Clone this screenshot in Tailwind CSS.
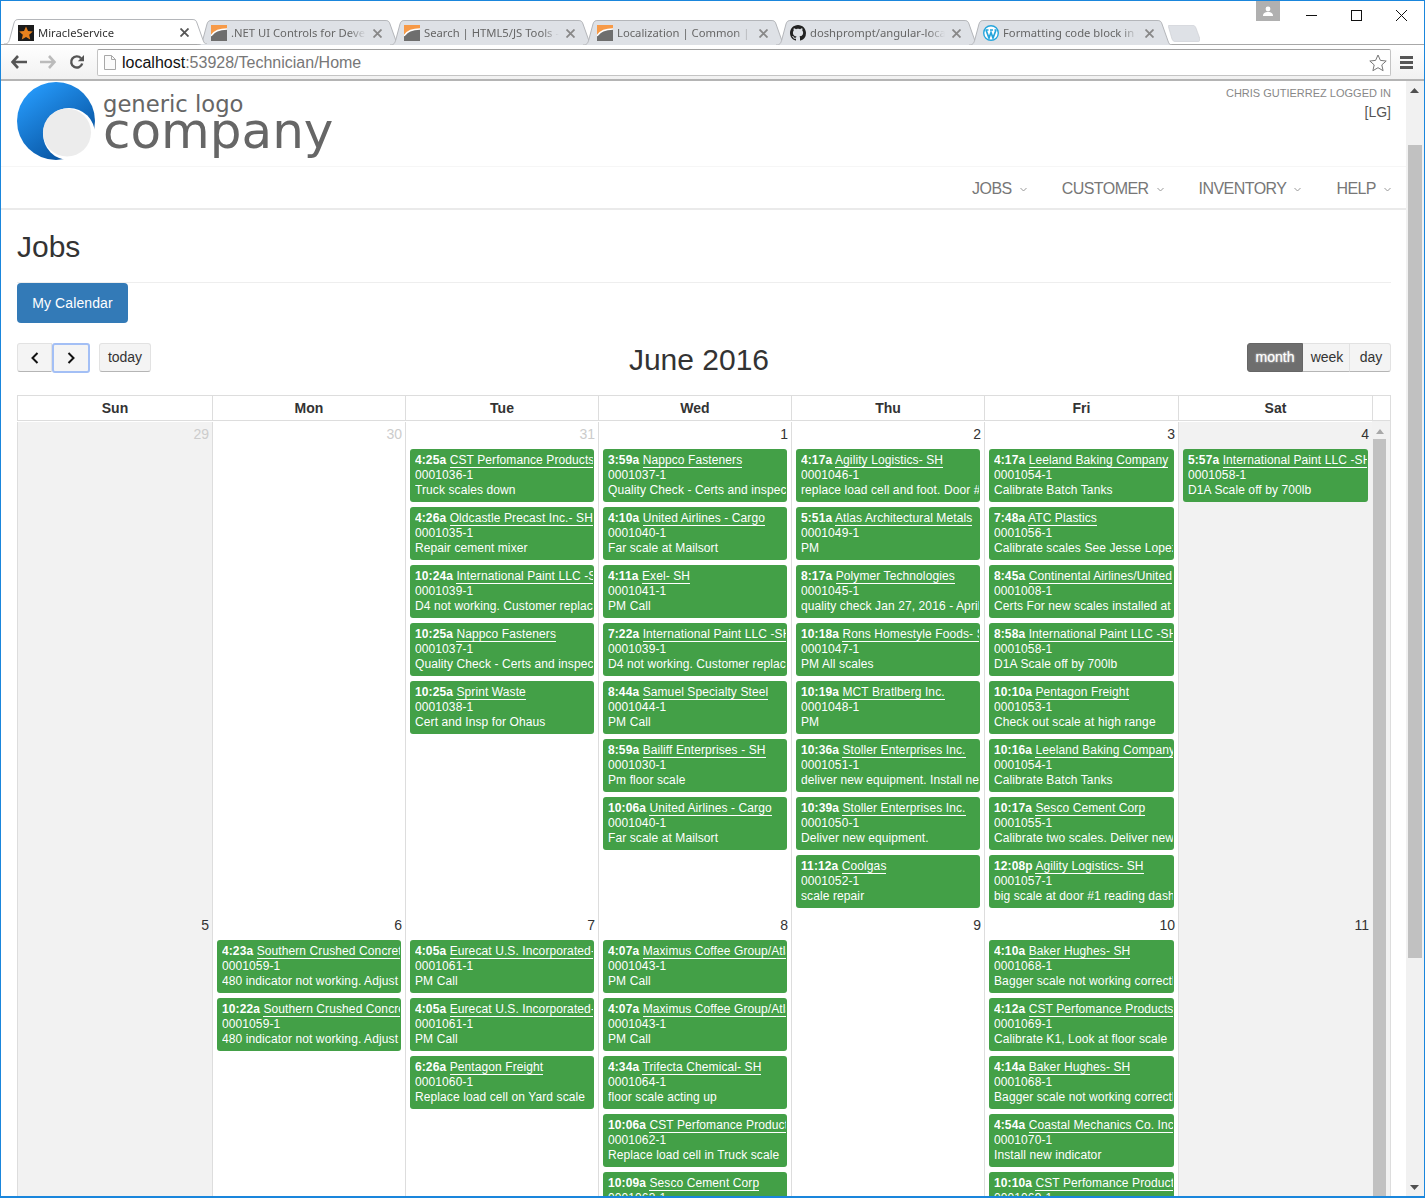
<!DOCTYPE html>
<html lang="en">
<head>
  <meta charset="UTF-8">
  <title>MiracleService</title>
  <script src="https://cdn.jsdelivr.net/npm/@tailwindcss/browser@4"></script>
</head>
<body class="bg-white">
<div class="w-[1425px] h-[1198px] overflow-hidden flex flex-col border border-[#1a86dc] border-b-2 bg-white text-[#333] [font-family:'Liberation_Sans',sans-serif]">

  <!-- Tab strip -->
  <div class="relative h-[44px] shrink-0 border-b border-[#a8a8a8] bg-white">
    <div id="tabs" class="flex items-end h-[43px] pl-[3px]"></div>
    <div class="absolute right-[144px] top-0 w-[24px] h-[20px] bg-[#b0b0b0] flex items-center justify-center">
      <svg width="10" height="10" viewBox="0 0 10 10"><circle cx="5" cy="3" r="2.4" fill="#fff"/><path d="M0 10c0-3 2-4 5-4s5 1 5 4z" fill="#fff"/></svg>
    </div>
    <div class="absolute right-[17px] top-[9px] flex gap-[34px] items-center">
      <svg width="11" height="11" viewBox="0 0 11 11"><path d="M0 5.5h11" stroke="#111" stroke-width="1"/></svg>
      <svg width="11" height="11" viewBox="0 0 11 11"><rect x=".5" y=".5" width="10" height="10" fill="none" stroke="#111"/></svg>
      <svg width="11" height="11" viewBox="0 0 11 11"><path d="M0 0l11 11M11 0L0 11" stroke="#111" stroke-width="1"/></svg>
    </div>
  </div>

  <!-- Toolbar -->
  <div class="h-[36px] shrink-0 flex items-center border-b-2 border-[#b4b4b4] bg-gradient-to-b from-white to-[#f1f1f1]">
    <svg class="ml-[10px]" width="16" height="14" viewBox="0 0 16 14"><path d="M7 1L1.5 7 7 13M2 7h14" fill="none" stroke="#555" stroke-width="2.6"/></svg>
    <svg class="ml-[13px]" width="16" height="14" viewBox="0 0 16 14"><path d="M9 1l5.5 6L9 13M14 7H0" fill="none" stroke="#bbb" stroke-width="2.6"/></svg>
    <svg class="ml-[13px]" width="16" height="16" viewBox="0 0 16 16"><path d="M13.2 9.5A5.6 5.6 0 1 1 12 4.2" fill="none" stroke="#555" stroke-width="2.4"/><path d="M15 1v6.2H8.8z" fill="#555"/></svg>
    <div class="ml-[12px] mt-px w-[1294px] h-[27px] flex items-center bg-white border border-[#c4c4c4] border-t-[#a0a0a0] rounded-[2px]">
      <svg class="ml-[6px]" width="12" height="15" viewBox="0 0 12 15"><path d="M.5.5h7l4 4v10H.5z" fill="#fbfbfb" stroke="#a8a8a8"/><path d="M7.5.5v4h4" fill="none" stroke="#a8a8a8"/></svg>
      <span class="ml-[6px] text-[16px] leading-[20px] text-[#777]"><span class="text-[#111]">localhost</span>:53928/Technician/Home</span>
      <svg class="ml-auto mr-[3px]" width="18" height="18" viewBox="0 0 18 18"><path d="M9 1l2.4 5.4 5.8.6-4.4 3.9 1.3 5.8L9 13.7l-5.1 3 1.3-5.8L.8 7l5.8-.6z" fill="#fff" stroke="#777"/></svg>
    </div>
    <div class="ml-[9px] flex flex-col gap-[2px]">
      <div class="w-[13px] h-[3px] bg-[#555]"></div>
      <div class="w-[13px] h-[3px] bg-[#555]"></div>
      <div class="w-[13px] h-[3px] bg-[#555]"></div>
    </div>
  </div>

  <!-- Page -->
  <div class="flex flex-1 min-h-0">
    <div class="w-[1405px] shrink-0 min-w-0 overflow-hidden">

      <header class="h-[86px] pl-[16px] pr-[15px] flex items-start border-b border-[#f6f6f6]">
        <svg class="mt-px shrink-0" width="78" height="78" viewBox="0 0 78 78">
          <defs>
            <linearGradient id="logoBlue" x1="0.15" y1="0.1" x2="0.75" y2="0.95">
              <stop offset="0" stop-color="#2598f8"/>
              <stop offset="1" stop-color="#06509c"/>
            </linearGradient>
          </defs>
          <circle cx="39" cy="39" r="39" fill="url(#logoBlue)"/>
          <circle cx="52" cy="52" r="26" fill="#fff"/>
          <circle cx="50" cy="50.5" r="24" fill="#ececec"/>
        </svg>
        <div class="ml-[8px] mt-[10px] flex flex-col text-[#666] [font-family:'DejaVu_Sans',sans-serif]">
          <span class="text-[22.7px] leading-[26px]">generic logo</span>
          <span class="text-[50px] leading-[46px] -mt-[9px]">company</span>
        </div>
        <div class="ml-auto pt-[6px] text-right">
          <div class="text-[11px] leading-[13px] text-[#888]">CHRIS GUTIERREZ LOGGED IN</div>
          <div class="mt-[2px] text-[14px] leading-[20px] text-[#555]">[LG]</div>
        </div>
      </header>

      <nav class="h-[43px] pt-[2px] pr-[15px] flex items-center justify-end border-b-2 border-[#eaeaea] text-[16px] tracking-[-0.55px] text-[#777]">
        <a class="flex items-center">JOBS<svg class="ml-[8px] mt-px" width="7" height="5" viewBox="0 0 7 5"><path d="M.5 1l3 3 3-3" fill="none" stroke="#999"/></svg></a>
        <a class="ml-[35px] flex items-center">CUSTOMER<svg class="ml-[8px] mt-px" width="7" height="5" viewBox="0 0 7 5"><path d="M.5 1l3 3 3-3" fill="none" stroke="#999"/></svg></a>
        <a class="ml-[35px] flex items-center">INVENTORY<svg class="ml-[8px] mt-px" width="7" height="5" viewBox="0 0 7 5"><path d="M.5 1l3 3 3-3" fill="none" stroke="#999"/></svg></a>
        <a class="ml-[35px] flex items-center">HELP<svg class="ml-[8px] mt-px" width="7" height="5" viewBox="0 0 7 5"><path d="M.5 1l3 3 3-3" fill="none" stroke="#999"/></svg></a>
      </nav>

      <main class="pl-[16px] pr-[15px]">
        <div class="h-[73px] border-b border-[#eee] flex items-center">
          <h2 class="text-[30px] leading-[33px] text-[#333]">Jobs</h2>
        </div>
        <button class="block w-[111px] h-[40px] rounded-[4px] bg-[#337ab7] text-white text-[14px] tracking-[0.1px]">My Calendar</button>

        <div class="mt-[20px] h-[30px] flex justify-between items-start">
          <div class="flex">
            <button class="w-[35px] h-[29px] flex items-center justify-center rounded-l-[3px] bg-[#f4f4f4] border border-[#e2e2e2] border-b-[#b5b5b5]">
              <svg width="10" height="12" viewBox="0 0 10 12"><path d="M7.5 1L2.5 6l5 5" fill="none" stroke="#111" stroke-width="2"/></svg>
            </button>
            <button class="w-[38px] h-[30px] flex items-center justify-center rounded-[3px] bg-[#f4f4f4] border-2 border-[#a3bff5]">
              <svg width="10" height="12" viewBox="0 0 10 12"><path d="M2.5 1l5 5-5 5" fill="none" stroke="#111" stroke-width="2"/></svg>
            </button>
            <button class="ml-[9px] w-[52px] h-[29px] rounded-[3px] bg-[#f4f4f4] border border-[#e2e2e2] border-b-[#b5b5b5] text-[14px] text-[#333]">today</button>
          </div>
          <h2 class="text-[30px] leading-[33px] text-[#333]">June 2016</h2>
          <div class="flex h-[29px] text-[14px]">
            <button class="w-[56px] rounded-l-[3px] bg-[#6e6e6e] border border-[#666] text-white [text-shadow:0_0_2px_#fff]">month</button>
            <button class="w-[47px] pl-[2px] bg-[#f4f4f4] border-y border-r border-[#e2e2e2] border-b-[#b5b5b5] text-[#333]">week</button>
            <button class="w-[41px] pl-[2px] rounded-r-[3px] bg-[#f4f4f4] border-y border-r border-[#e2e2e2] border-b-[#b5b5b5] text-[#333]">day</button>
          </div>
        </div>

        <!-- Calendar -->
        <div class="mt-[22px] w-[1374px] border-t border-r border-[#ddd]">
          <div class="flex h-[25px] border-b border-[#ddd]">
            <div id="head" class="w-[1355px] grid grid-cols-[195px_193px_193px_193px_193px_194px_194px]"></div>
            <div class="w-[18px] border-l border-[#ddd]"></div>
          </div>
          <div class="flex">
            <div id="weeks" class="w-[1355px] shrink-0"></div>
            <div class="w-[18px] bg-[#f1f1f1] flex flex-col items-start pl-[1px]">
              <svg class="mt-[8px] ml-[3px]" width="8" height="5" viewBox="0 0 8 5"><path d="M4 0l4 5H0z" fill="#a8a8a8"/></svg>
              <div class="mt-[5px] w-[13px] h-[900px] bg-[#c1c1c1]"></div>
            </div>
          </div>
        </div>
      </main>
    </div>

    <!-- Page scrollbar -->
    <div class="w-[18px] bg-[#f1f1f1] flex flex-col pl-[2px]">
      <svg class="mt-[7px] ml-[2px]" width="9" height="5" viewBox="0 0 9 5"><path d="M4.500 0l4.500 5H0z" fill="#505050"/></svg>
      <div class="mt-[52px] w-[14px] h-[813px] bg-[#c1c1c1]"></div>
      <svg class="mt-auto mb-[6px] ml-[2px]" width="9" height="5" viewBox="0 0 9 5"><path d="M4.500 5L9 0H0z" fill="#505050"/></svg>
    </div>
  </div>
</div>

<script>
  // Browser tabs
  const orange = `<svg class="shrink-0" width="16" height="16" viewBox="0 0 16 16"><rect width="16" height="16" fill="#f79a48"/><path d="M0 16v-5C3 6 9 4 16 4v12z" fill="#6e6e6e"/><path d="M0 11C3 6 9 4 16 4" fill="none" stroke="#fff" stroke-width="1.4"/></svg>`;
  const tabs = [
    ['MiracleService', `<svg class="shrink-0" width="16" height="16" viewBox="0 0 16 16"><rect width="16" height="16" fill="#1c1c1c"/><path d="M8 1.500l2 4.500 4.800.5-3.600 3.200 1 4.800L8 12.100l-4.200 2.400 1-4.800L1.200 6.500 6 6z" fill="#e8821e"/></svg>`],
    ['.NET UI Controls for Developers', orange],
    ['Search | HTML5/JS Tools - Infragistics', orange],
    ['Localization | Common | Help', orange],
    ['doshprompt/angular-localization', `<svg class="shrink-0" width="16" height="16" viewBox="0 0 16 16"><path fill="#222" d="M8 0C3.580 0 0 3.580 0 8c0 3.540 2.290 6.530 5.470 7.590.4.070.55-.17.55-.38 0-.19-.01-.82-.01-1.490-2.010.37-2.530-.49-2.690-.94-.09-.23-.48-.94-.82-1.130-.28-.15-.68-.52-.01-.53.63-.01 1.080.58 1.230.82.72 1.210 1.870.87 2.330.66.07-.52.28-.87.51-1.070-1.780-.2-3.640-.89-3.640-3.950 0-.87.31-1.590.82-2.150-.08-.2-.36-1.020.08-2.120 0 0 .67-.21 2.200.82.64-.18 1.320-.27 2-.27.68 0 1.360.09 2 .27 1.530-1.040 2.200-.82 2.200-.82.44 1.100.16 1.920.08 2.120.51.56.82 1.270.82 2.150 0 3.070-1.870 3.750-3.650 3.950.29.25.54.73.54 1.480 0 1.070-.01 1.930-.01 2.200 0 .21.15.46.55.38A8.013 8.013 0 0016 8c0-4.420-3.580-8-8-8z"/></svg>`],
    ['Formatting code block in Chrome', `<svg class="shrink-0" width="16" height="16" viewBox="0 0 16 16"><circle cx="8" cy="8" r="7.300" fill="#fff" stroke="#25a5dc" stroke-width="1.400"/><path d="M3 5l3 8 2-5.500L10 13l3-8M2.500 5h3M7 5h3M11.500 5h2" fill="none" stroke="#25a5dc" stroke-width="1.700"/></svg>`]
  ];
  document.getElementById('tabs').innerHTML = tabs.map((t, i) => {
    const active = i === 0;
    return `
    <div class="relative ${active ? 'z-10 h-[25px]' : 'h-[24px]'} w-[203px] shrink-0 ${i ? '-ml-[10px]' : ''} flex items-center pl-[14px] pt-[2px]">
      <svg class="absolute left-0 top-0" width="203" height="25" viewBox="0 0 203 25">
        <path d="M0 25C4 25 5 23 6 19L10 4C11 1 12 .5 15 .5H188C191 .5 192 1 193 4L199 21C200 24 201 25 203 25" fill="${active ? '#fff' : '#dee1e6'}" stroke="#b4b6ba"/>
      </svg>
      <div class="relative flex items-center w-full">
        ${t[1]}
        <span class="ml-[4px] w-[135px] overflow-hidden whitespace-nowrap text-[11.25px] leading-[16px] [font-family:'Noto_Sans',sans-serif] [mask-image:linear-gradient(to_right,black_118px,transparent_135px)] ${active ? 'text-[#333]' : 'text-[#666]'}">${t[0]}</span>
        <svg class="ml-[7px]" width="9" height="9" viewBox="0 0 9 9"><path d="M.5.5l8 8M8.500.5l-8 8" stroke="${active ? '#555' : '#888'}" stroke-width="1.800"/></svg>
      </div>
    </div>`;
  }).join('') + `
    <svg class="-ml-[4px] mb-[2px] shrink-0" width="32" height="17" viewBox="0 0 32 17"><path d="M1 0H24C26 0 27 1 28 3L32 14C32 16 31 17 29 17H8C6 17 5 16 4 14L.5 2C.5 1 .5 0 1 0z" fill="#dee1e6" stroke="#c9cbd0" stroke-width=".6"/></svg>`;

  // Calendar header
  document.getElementById('head').innerHTML = ['Sun','Mon','Tue','Wed','Thu','Fri','Sat'].map(d =>
    `<div class="border-l border-[#ddd] text-center text-[14px] leading-[24px] font-bold text-[#333]">${d}</div>`
  ).join('');

  // Job events per day: [time, customer, job number, note]
  const intl1 = 'International Paint LLC -SH', quality = 'Quality Check - Certs and inspection';
  const week1 = [
    { n: 29, off: true, wk: true, ev: [] },
    { n: 30, off: true, ev: [] },
    { n: 31, off: true, ev: [
      ['4:25a','CST Perfomance Products','0001036-1','Truck scales down'],
      ['4:26a','Oldcastle Precast Inc.- SH','0001035-1','Repair cement mixer'],
      ['10:24a',intl1,'0001039-1','D4 not working. Customer replaced'],
      ['10:25a','Nappco Fasteners','0001037-1',quality],
      ['10:25a','Sprint Waste','0001038-1','Cert and Insp for Ohaus']
    ]},
    { n: 1, ev: [
      ['3:59a','Nappco Fasteners','0001037-1',quality],
      ['4:10a','United Airlines - Cargo','0001040-1','Far scale at Mailsort'],
      ['4:11a','Exel- SH','0001041-1','PM Call'],
      ['7:22a',intl1,'0001039-1','D4 not working. Customer replaced'],
      ['8:44a','Samuel Specialty Steel','0001044-1','PM Call'],
      ['8:59a','Bailiff Enterprises - SH','0001030-1','Pm floor scale'],
      ['10:06a','United Airlines - Cargo','0001040-1','Far scale at Mailsort']
    ]},
    { n: 2, ev: [
      ['4:17a','Agility Logistics- SH','0001046-1','replace load cell and foot. Door #1'],
      ['5:51a','Atlas Architectural Metals','0001049-1','PM'],
      ['8:17a','Polymer Technologies','0001045-1','quality check Jan 27, 2016 - April'],
      ['10:18a','Rons Homestyle Foods- SH','0001047-1','PM All scales'],
      ['10:19a','MCT Bratlberg Inc.','0001048-1','PM'],
      ['10:36a','Stoller Enterprises Inc.','0001051-1','deliver new equipment. Install new'],
      ['10:39a','Stoller Enterprises Inc.','0001050-1','Deliver new equipment.'],
      ['11:12a','Coolgas','0001052-1','scale repair']
    ]},
    { n: 3, ev: [
      ['4:17a','Leeland Baking Company','0001054-1','Calibrate Batch Tanks'],
      ['7:48a','ATC Plastics','0001056-1','Calibrate scales See Jesse Lopez'],
      ['8:45a','Continental Airlines/United','0001008-1','Certs For new scales installed at'],
      ['8:58a',intl1,'0001058-1','D1A Scale off by 700lb'],
      ['10:10a','Pentagon Freight','0001053-1','Check out scale at high range'],
      ['10:16a','Leeland Baking Company','0001054-1','Calibrate Batch Tanks'],
      ['10:17a','Sesco Cement Corp','0001055-1','Calibrate two scales. Deliver new'],
      ['12:08p','Agility Logistics- SH','0001057-1','big scale at door #1 reading dash']
    ]},
    { n: 4, wk: true, ev: [
      ['5:57a',intl1,'0001058-1','D1A Scale off by 700lb']
    ]}
  ];
  const week2 = [
    { n: 5, wk: true, ev: [] },
    { n: 6, ev: [
      ['4:23a','Southern Crushed Concrete','0001059-1','480 indicator not working. Adjust'],
      ['10:22a','Southern Crushed Concrete','0001059-1','480 indicator not working. Adjust']
    ]},
    { n: 7, ev: [
      ['4:05a','Eurecat U.S. Incorporated- SH','0001061-1','PM Call'],
      ['4:05a','Eurecat U.S. Incorporated- SH','0001061-1','PM Call'],
      ['6:26a','Pentagon Freight','0001060-1','Replace load cell on Yard scale']
    ]},
    { n: 8, ev: [
      ['4:07a','Maximus Coffee Group/Atlanta','0001043-1','PM Call'],
      ['4:07a','Maximus Coffee Group/Atlanta','0001043-1','PM Call'],
      ['4:34a','Trifecta Chemical- SH','0001064-1','floor scale acting up'],
      ['10:06a','CST Perfomance Products','0001062-1','Replace load cell in Truck scale'],
      ['10:09a','Sesco Cement Corp','0001063-1','Calibrate scale']
    ]},
    { n: 9, ev: [] },
    { n: 10, ev: [
      ['4:10a','Baker Hughes- SH','0001068-1','Bagger scale not working correctly'],
      ['4:12a','CST Perfomance Products','0001069-1','Calibrate K1, Look at floor scale'],
      ['4:14a','Baker Hughes- SH','0001068-1','Bagger scale not working correctly'],
      ['4:54a','Coastal Mechanics Co. Inc','0001070-1','Install new indicator'],
      ['10:10a','CST Perfomance Products','0001069-1','Calibrate K1']
    ]},
    { n: 11, wk: true, ev: [] }
  ];

  function renderEvent(e) {
    return `
      <div class="ml-[4px] mr-[4px] mb-[5px] h-[53px] rounded-[3px] bg-[#43a047] pl-[5px] pr-px pt-[4px] text-[12px] leading-[15px] tracking-[0.1px] text-white overflow-hidden">
        <div class="whitespace-nowrap overflow-hidden"><b>${e[0]}</b> <span class="border-b border-white">${e[1]}</span></div>
        <div class="whitespace-nowrap overflow-hidden">${e[2]}</div>
        <div class="whitespace-nowrap overflow-hidden">${e[3]}</div>
      </div>`;
  }
  function renderWeek(days, rowClass) {
    return `<div class="grid grid-cols-[195px_193px_193px_193px_193px_194px_194px] border-t ${rowClass}">` + days.map(d => `
      <div class="min-w-0 border-l border-[#ddd] ${d.wk ? 'bg-[#f2f2f2]' : 'bg-white'}">
        <div class="h-[27px] pr-[3px] text-right text-[14px] leading-[24px] ${d.off ? 'text-[#ccc]' : 'text-[#333]'}">${d.n}</div>
        ${d.ev.map(renderEvent).join('')}
      </div>`).join('') + `</div>`;
  }
  document.getElementById('weeks').innerHTML =
    renderWeek(week1, 'h-[491px] border-white') + renderWeek(week2, 'h-[420px] border-[#ddd]');
</script>
</body>
</html>
